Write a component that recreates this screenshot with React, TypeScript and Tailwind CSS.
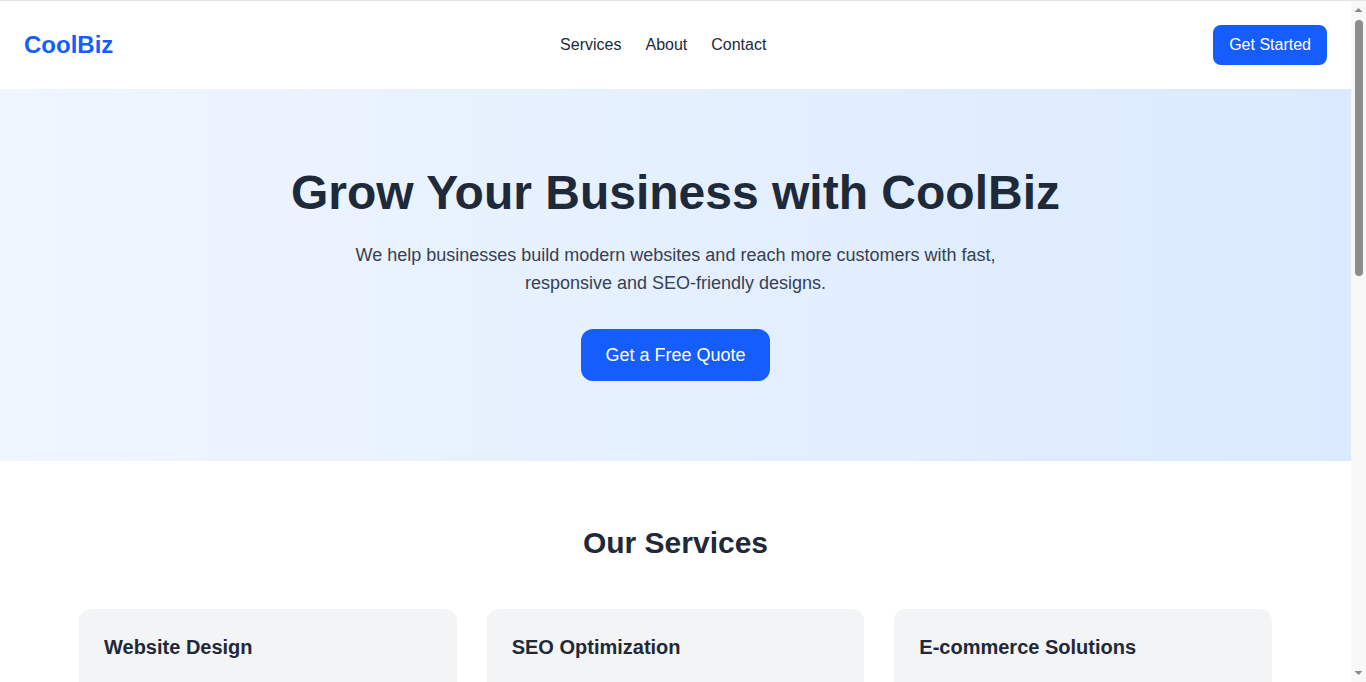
import React from "react";

const services = [
  {
    title: "Website Design",
    desc: "Modern, responsive websites designed to convert visitors into customers.",
  },
  {
    title: "SEO Optimization",
    desc: "Improve your search rankings and get found by more customers online.",
  },
  {
    title: "E-commerce Solutions",
    desc: "Sell your products online with secure and easy-to-manage stores.",
  },
];

function FakeScrollbar() {
  return (
    <aside className="sticky top-0 flex h-screen w-[15px] shrink-0 flex-col items-center border-t border-[#e3e3e3] bg-[#f8f8f8]">
      <svg width="15" height="17" viewBox="0 0 15 17" className="shrink-0">
        <path d="M3.5 11 L7.5 7 L11.5 11 Z" fill="#8a8a8a" />
      </svg>
      <div className="mt-[2px] h-[256px] w-[8px] rounded-full bg-[#8c8c8c]" />
      <div className="flex-1" />
      <svg width="15" height="17" viewBox="0 0 15 17" className="shrink-0">
        <path d="M3.5 6 L7.5 10 L11.5 6 Z" fill="#8a8a8a" />
      </svg>
    </aside>
  );
}

export default function App() {
  return (
    <div className="flex min-h-screen bg-white font-['Liberation_Sans',Arial,sans-serif] text-gray-800">
      <div className="min-w-0 flex-1">
        <header className="flex items-center justify-between border-t border-[#e3e3e3] bg-white px-6 py-6">
          <div className="text-2xl font-bold text-blue-600">CoolBiz</div>
          <nav className="flex gap-6 text-base text-gray-800">
            <a href="#services">Services</a>
            <a href="#about">About</a>
            <a href="#contact">Contact</a>
          </nav>
          <button className="rounded-lg bg-blue-600 px-4 py-2 text-base text-white">
            Get Started
          </button>
        </header>

        <section className="bg-gradient-to-r from-blue-50 to-blue-100 px-6 py-20 text-center">
          <h1 className="text-5xl font-bold text-gray-800">
            Grow Your Business with CoolBiz
          </h1>
          <p className="mx-auto mt-6 max-w-2xl text-lg leading-7 text-gray-700">
            We help businesses build modern websites and reach more customers
            with fast, responsive and SEO-friendly designs.
          </p>
          <button className="mt-8 rounded-xl bg-blue-600 px-6 py-3 text-lg text-white">
            Get a Free Quote
          </button>
        </section>

        <section id="services" className="px-[79px] py-16">
          <h2 className="mb-12 text-center text-3xl font-bold text-gray-800">
            Our Services
          </h2>
          <div className="grid grid-cols-3 gap-[30px]">
            {services.map((s) => (
              <div key={s.title} className="rounded-xl bg-gray-100 py-6 pl-[25px] pr-6">
                <h3 className="text-xl font-bold text-gray-800">{s.title}</h3>
                <p className="mt-8 text-base text-gray-600">{s.desc}</p>
              </div>
            ))}
          </div>
        </section>

        <section id="about" className="bg-gray-50 px-6 py-16 text-center">
          <h2 className="text-3xl font-bold text-gray-800">About Us</h2>
          <p className="mx-auto mt-4 max-w-2xl text-lg text-gray-700">
            CoolBiz is a team of designers and developers helping small
            businesses grow online.
          </p>
        </section>

        <footer id="contact" className="bg-gray-800 px-6 py-8 text-center text-white">
          © 2024 CoolBiz. All rights reserved.
        </footer>
      </div>
      <FakeScrollbar />
    </div>
  );
}
